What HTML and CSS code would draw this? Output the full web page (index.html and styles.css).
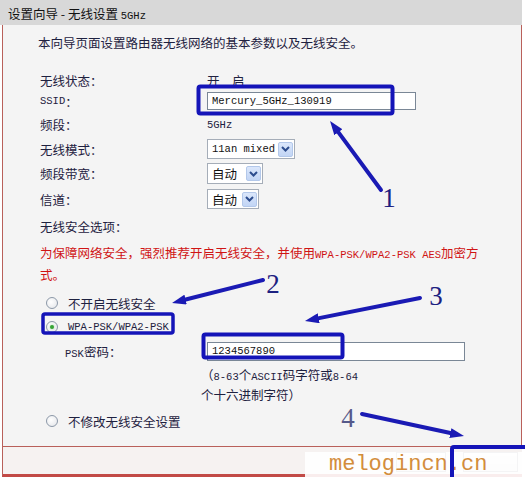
FILE: index.html
```html
<!DOCTYPE html>
<html>
  <head>
    <meta charset="utf-8">
    <title>设置向导 - 无线设置 5GHz</title>
    <link rel="stylesheet" href="styles.css">
  </head>
  <body>
    <div class="page">
      <div class="title">设置向导 - 无线设置 <span class="en">5GHz</span></div>

      <div class="panel">
        <p class="intro">本向导页面设置路由器无线网络的基本参数以及无线安全。</p>

        <div class="form">
          <span class="label">无线状态：</span>
          <span class="value">开　启</span>

          <span class="label"><span class="en">SSID</span>：</span>
          <span class="value"><input class="text ssid" type="text" value="Mercury_5GHz_130919"></span>

          <span class="label">频段：</span>
          <span class="value en">5GHz</span>

          <span class="label">无线模式：</span>
          <span class="value">
            <span class="select mode"><span class="en">11an mixed</span><span class="drop"><svg width="9" height="6" viewBox="0 0 9 6"><path d="M1 1 L4.5 4.5 L8 1" /></svg></span></span>
          </span>

          <span class="label">频段带宽：</span>
          <span class="value">
            <span class="select auto">自动<span class="drop"><svg width="9" height="6" viewBox="0 0 9 6"><path d="M1 1 L4.5 4.5 L8 1" /></svg></span></span>
          </span>

          <span class="label">信道：</span>
          <span class="value">
            <span class="select chan">自动<span class="drop"><svg width="9" height="6" viewBox="0 0 9 6"><path d="M1 1 L4.5 4.5 L8 1" /></svg></span></span>
          </span>

          <span class="label">无线安全选项：</span>
          <span class="value"></span>
        </div>

        <p class="note">为保障网络安全，强烈推荐开启无线安全，并使用<span class="en">WPA-PSK/WPA2-PSK AES</span>加密方<br>式。</p>

        <div class="opt"><span class="radio"></span>不开启无线安全</div>
        <div class="opt"><span class="radio checked"></span><span class="en">WPA-PSK/WPA2-PSK</span></div>
        <div class="opt psk">
          <span class="psk-label"><span class="en">PSK</span>密码：</span>
          <input class="text pass" type="text" value="1234567890">
        </div>
        <p class="help">（<span class="en">8-63</span>个<span class="en">ASCII</span>码字符或<span class="en">8-64</span><br>个十六进制字符）</p>
        <div class="opt last"><span class="radio"></span>不修改无线安全设置</div>
      </div>

      <div class="footer">
        <!-- button captions sit under the watermark in the screenshot -->
        <button class="btn back" aria-label="上一步"></button>
        <button class="btn next" aria-label="下一步"></button>
      </div>

      <div class="watermark">melogincn.cn</div>

      <svg class="marks" width="525" height="477" viewBox="0 0 525 477">
        <defs>
          <marker id="head" markerUnits="userSpaceOnUse" markerWidth="14" markerHeight="10" viewBox="0 0 14 10" refX="6" refY="5" orient="auto">
            <path d="M0 0 L14 5 L0 10 z" fill="#1a1ab4" />
          </marker>
        </defs>
        <g fill="none" stroke="#1414b8" stroke-linejoin="round">
          <rect x="198.5" y="86.5" width="194" height="27" rx="2" stroke-width="4" />
          <rect x="43" y="314" width="130" height="19" rx="2" stroke-width="3.5" />
          <rect x="203.5" y="334.5" width="139" height="23" rx="2" stroke-width="4" />
          <rect x="452" y="447" width="80" height="40" rx="2" stroke-width="4" />
        </g>
        <g stroke="#1a1ab4" stroke-width="4" stroke-linecap="round" marker-end="url(#head)">
          <line x1="381" y1="190" x2="334.8" y2="127.4" />
          <line x1="263" y1="280" x2="179.8" y2="301" />
          <line x1="420" y1="298" x2="312.8" y2="319.4" />
          <line x1="362" y1="414" x2="456.2" y2="434.3" />
        </g>
        <g class="num" text-anchor="middle">
          <text x="389" y="207">1</text>
          <text x="273" y="293">2</text>
          <text x="436" y="305">3</text>
          <text x="348" y="427" class="faint">4</text>
        </g>
      </svg>
    </div>
  </body>
</html>
```

FILE: styles.css
```css
body {
  margin: 0;
  background: #fff;
  font-family: "Noto Sans CJK SC", sans-serif;
  font-size: 12.5px;
  color: #1e2140;
}
.page {
  position: relative;
  width: 525px;
  height: 477px;
  overflow: hidden;
}
.en {
  font-family: "Liberation Mono", monospace;
  font-size: 10.5px;
}
.title {
  width: 522px;
  height: 25px;
  box-sizing: border-box;
  padding: 2px 0 0 8px;
  line-height: 23px;
  background: #d8d8d8;
  color: #111;
}
.panel {
  width: 520px;
  height: 422px;
  margin-left: 2px;
  box-sizing: border-box;
  padding: 9px 0 0 37px;
  background: #f4f4f4;
  border: 1px solid #b9605a;
  border-top: none;
}
.intro {
  margin: 0 0 0 -2px;
  line-height: 18px;
}
.form {
  display: grid;
  grid-template-columns: 167px auto;
  grid-template-rows: 20px 22px 25px 24px 25px 26px 28px;
  margin-top: 18px;
}
.label,
.value {
  display: flex;
  align-items: center;
}
.text {
  height: 18px;
  box-sizing: border-box;
  margin: 0;
  padding: 0 4px;
  border: 1px solid #7a8796;
  background: #fff;
  font-family: "Liberation Mono", monospace;
  font-size: 10.5px;
  color: #111;
}
.ssid {
  width: 209px;
}
.pass {
  width: 258px;
  height: 19px;
}
.select {
  display: inline-flex;
  align-items: center;
  justify-content: space-between;
  height: 20px;
  box-sizing: border-box;
  padding: 0 1px 0 4px;
  border: 1px solid #a5adb8;
  background: #fff;
  color: #111;
}
.mode {
  width: 88px;
}
.auto {
  width: 56px;
  height: 21px;
}
.chan {
  width: 52px;
}
.drop {
  display: flex;
  align-items: center;
  justify-content: center;
  width: 15px;
  height: 15px;
  box-sizing: border-box;
  border: 1px solid #b3c8ea;
  border-radius: 2px;
  background: linear-gradient(#dbe7fb, #c2d5f5);
}
.drop path {
  fill: none;
  stroke: #2d4d8e;
  stroke-width: 2;
}
.note {
  margin: 3px 0 0;
  line-height: 19px;
  color: #d01414;
}
.opt {
  display: flex;
  align-items: center;
  height: 24px;
}
.note + .opt {
  margin-top: 7px;
}
.radio {
  position: relative;
  width: 12px;
  height: 12px;
  margin: 0 10px 0 6px;
  box-sizing: border-box;
  border: 1px solid #8c98a8;
  border-radius: 50%;
  background: radial-gradient(circle at 40% 40%, #fff, #e2e4e8);
}
.radio.checked::after {
  content: "";
  position: absolute;
  left: 3px;
  top: 3px;
  width: 4px;
  height: 4px;
  border-radius: 50%;
  background: #36a336;
  box-shadow: 0 0 2px #8fd08f;
}
.psk-label {
  width: 142px;
  padding-left: 25px;
}
.help {
  margin: 3px 0 0 161px;
  line-height: 18px;
}
.opt.last {
  margin-top: 5px;
}
.footer {
  display: flex;
  justify-content: flex-end;
  gap: 17px;
  width: 520px;
  height: 30px;
  margin-left: 2px;
  box-sizing: border-box;
  padding: 5px 4px 0 0;
  background: #f6f2f1;
  border-left: 1px solid #b9605a;
  border-bottom: 3px solid #c24a46;
}
.btn {
  height: 20px;
  padding: 0;
  border: 1px solid #8a9099;
  background: linear-gradient(#fafafa, #e4e4e4);
}
.back {
  width: 50px;
}
.next {
  width: 55px;
}
.watermark {
  position: absolute;
  left: 305px;
  top: 452px;
  width: 220px;
  height: 25px;
  box-sizing: border-box;
  padding-left: 24px;
  background: rgba(255, 255, 255, 0.9);
  font-family: "Liberation Mono", monospace;
  font-size: 22px;
  line-height: 25px;
  color: #d38d3c;
}
.marks {
  position: absolute;
  left: 0;
  top: 0;
  pointer-events: none;
}
.num {
  font-family: "Liberation Serif", serif;
  font-size: 27px;
  fill: #1c2080;
}
.num .faint {
  fill: #55598a;
}
```
